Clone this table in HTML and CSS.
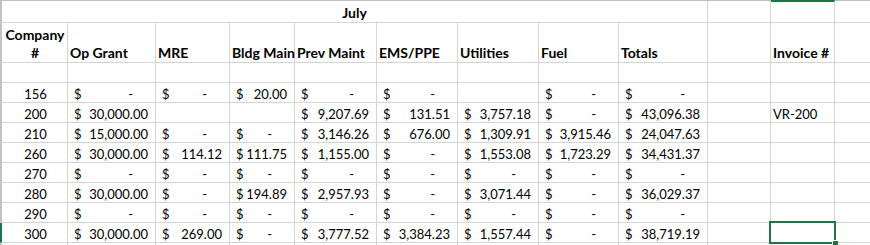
FILE: index.html
```html
<!DOCTYPE html>
<html>
<head>
<meta charset="utf-8">
<title>July</title>
<link rel="stylesheet" href="styles.css">
</head>
<body>
<div class="sheet">
  <div class="c first top h merge">July</div>
  <div class="c top"></div>
  <div class="c top selcol"></div>
  <div class="c top last"></div>

  <div class="c first h company">Company<br>#</div>
  <div class="c h">Op Grant</div>
  <div class="c h">MRE</div>
  <div class="c h">Bldg Main</div>
  <div class="c h">Prev Maint</div>
  <div class="c h">EMS/PPE</div>
  <div class="c h">Utilities</div>
  <div class="c h">Fuel</div>
  <div class="c h">Totals</div>
  <div class="c h"></div>
  <div class="c h">Invoice #</div>
  <div class="c last"></div>

  <div class="c first"></div><div class="c"></div><div class="c"></div><div class="c"></div><div class="c"></div><div class="c"></div><div class="c"></div><div class="c"></div><div class="c"></div><div class="c"></div><div class="c"></div><div class="c last"></div>

  <div class="c first n">156</div>
  <div class="c a z"><span>$</span><span>-</span></div>
  <div class="c a z"><span>$</span><span>-</span></div>
  <div class="c a"><span>$</span><span>20.00</span></div>
  <div class="c a z"><span>$</span><span>-</span></div>
  <div class="c a z"><span>$</span><span>-</span></div>
  <div class="c"></div>
  <div class="c a z"><span>$</span><span>-</span></div>
  <div class="c a z"><span>$</span><span>-</span></div>
  <div class="c"></div><div class="c"></div><div class="c last"></div>

  <div class="c first n">200</div>
  <div class="c a"><span>$</span><span>30,000.00</span></div>
  <div class="c"></div>
  <div class="c"></div>
  <div class="c a"><span>$</span><span>9,207.69</span></div>
  <div class="c a"><span>$</span><span>131.51</span></div>
  <div class="c a"><span>$</span><span>3,757.18</span></div>
  <div class="c a z"><span>$</span><span>-</span></div>
  <div class="c a"><span>$</span><span>43,096.38</span></div>
  <div class="c"></div>
  <div class="c t">VR-200</div>
  <div class="c last"></div>

  <div class="c first n">210</div>
  <div class="c a"><span>$</span><span>15,000.00</span></div>
  <div class="c a z"><span>$</span><span>-</span></div>
  <div class="c a z"><span>$</span><span>-</span></div>
  <div class="c a"><span>$</span><span>3,146.26</span></div>
  <div class="c a"><span>$</span><span>676.00</span></div>
  <div class="c a"><span>$</span><span>1,309.91</span></div>
  <div class="c a"><span>$</span><span>3,915.46</span></div>
  <div class="c a"><span>$</span><span>24,047.63</span></div>
  <div class="c"></div><div class="c"></div><div class="c last"></div>

  <div class="c first n">260</div>
  <div class="c a"><span>$</span><span>30,000.00</span></div>
  <div class="c a"><span>$</span><span>114.12</span></div>
  <div class="c a"><span>$</span><span>111.75</span></div>
  <div class="c a"><span>$</span><span>1,155.00</span></div>
  <div class="c a z"><span>$</span><span>-</span></div>
  <div class="c a"><span>$</span><span>1,553.08</span></div>
  <div class="c a"><span>$</span><span>1,723.29</span></div>
  <div class="c a"><span>$</span><span>34,431.37</span></div>
  <div class="c"></div><div class="c"></div><div class="c last"></div>

  <div class="c first n">270</div>
  <div class="c a z"><span>$</span><span>-</span></div>
  <div class="c a z"><span>$</span><span>-</span></div>
  <div class="c a z"><span>$</span><span>-</span></div>
  <div class="c a z"><span>$</span><span>-</span></div>
  <div class="c a z"><span>$</span><span>-</span></div>
  <div class="c a z"><span>$</span><span>-</span></div>
  <div class="c a z"><span>$</span><span>-</span></div>
  <div class="c a z"><span>$</span><span>-</span></div>
  <div class="c"></div><div class="c"></div><div class="c last"></div>

  <div class="c first n">280</div>
  <div class="c a"><span>$</span><span>30,000.00</span></div>
  <div class="c a z"><span>$</span><span>-</span></div>
  <div class="c a"><span>$</span><span>194.89</span></div>
  <div class="c a"><span>$</span><span>2,957.93</span></div>
  <div class="c a z"><span>$</span><span>-</span></div>
  <div class="c a"><span>$</span><span>3,071.44</span></div>
  <div class="c a z"><span>$</span><span>-</span></div>
  <div class="c a"><span>$</span><span>36,029.37</span></div>
  <div class="c"></div><div class="c"></div><div class="c last"></div>

  <div class="c first n">290</div>
  <div class="c a z"><span>$</span><span>-</span></div>
  <div class="c a z"><span>$</span><span>-</span></div>
  <div class="c a z"><span>$</span><span>-</span></div>
  <div class="c a z"><span>$</span><span>-</span></div>
  <div class="c a z"><span>$</span><span>-</span></div>
  <div class="c a z"><span>$</span><span>-</span></div>
  <div class="c a z"><span>$</span><span>-</span></div>
  <div class="c a z"><span>$</span><span>-</span></div>
  <div class="c"></div><div class="c"></div><div class="c last"></div>

  <div class="c first selrow n">300</div>
  <div class="c a"><span>$</span><span>30,000.00</span></div>
  <div class="c a"><span>$</span><span>269.00</span></div>
  <div class="c a z"><span>$</span><span>-</span></div>
  <div class="c a"><span>$</span><span>3,777.52</span></div>
  <div class="c a"><span>$</span><span>3,384.23</span></div>
  <div class="c a"><span>$</span><span>1,557.44</span></div>
  <div class="c a z"><span>$</span><span>-</span></div>
  <div class="c a"><span>$</span><span>38,719.19</span></div>
  <div class="c"></div>
  <div class="c active"></div>
  <div class="c last"></div>

  <div class="c first"></div><div class="c"></div><div class="c"></div><div class="c"></div><div class="c"></div><div class="c"></div><div class="c"></div><div class="c"></div><div class="c"></div><div class="c"></div><div class="c"></div><div class="c last"></div>
</div>
</body>
</html>
```

FILE: styles.css
```css
html, body {
  margin: 0;
  padding: 0;
  background: #ffffff;
}

body {
  font-family: "Lato", "Liberation Sans", sans-serif;
  font-size: 13px;
  color: #000000;
  overflow: hidden;
}

.sheet {
  display: grid;
  grid-template-columns: 68px 88px 74px 65px 82px 81px 81px 80px 89px 63px 64px 1fr;
  grid-template-rows: 23px 40px;
  grid-auto-rows: 20px;
  width: 870px;
}

.c {
  box-sizing: border-box;
  border-right: 1px solid #d4d4d4;
  border-bottom: 1px solid #d4d4d4;
  display: flex;
  align-items: flex-end;
  line-height: 16px;
  white-space: nowrap;
  min-width: 0;
}

.first {
  border-left: 2px solid #c2c2c2;
}

.last {
  border-right: none;
}

.top {
  border-top: 1px solid #bdbdbd;
}

.selcol {
  border-top: 2px solid #217346;
}

.selrow {
  border-left-color: #217346;
}

.merge {
  grid-column: span 9;
  justify-content: center;
}

.h {
  font-weight: 700;
  font-size: 14px;
  line-height: 18px;
  padding: 0 2px;
}

.company {
  justify-content: center;
  text-align: center;
  padding-left: 3px;
}

.n {
  justify-content: center;
  padding-left: 2px;
}

.t {
  padding-left: 2px;
}

.a {
  justify-content: space-between;
  padding: 0 7px 0 6px;
}

.z span:last-child {
  margin-right: 15px;
}

.active {
  position: relative;
}

.active::after {
  content: "";
  position: absolute;
  left: -2px;
  top: -2px;
  width: 67px;
  height: 23px;
  box-sizing: border-box;
  border: 2px solid #217346;
}

.active::before {
  content: "";
  position: absolute;
  left: 61px;
  top: 17px;
  width: 5px;
  height: 5px;
  background: #217346;
  border-top: 1px solid #ffffff;
  border-left: 1px solid #ffffff;
  z-index: 2;
}
```
